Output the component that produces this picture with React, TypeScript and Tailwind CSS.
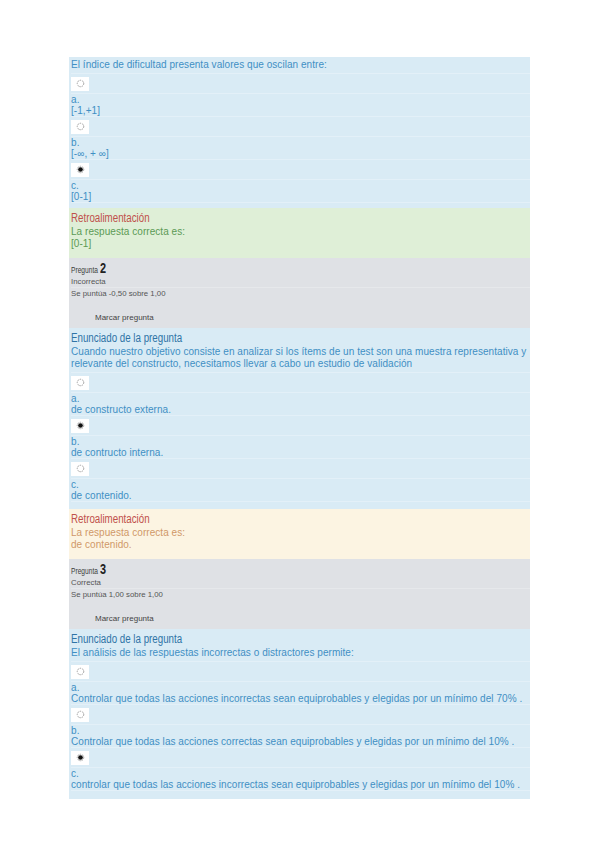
const sans = "font-['Liberation_Sans',Arial,sans-serif]";
const narrow = "inline-block origin-left scale-x-[0.78] whitespace-nowrap";

type Option = { letter: string; text: string; checked?: boolean };

const Radio = ({ checked }: { checked?: boolean }) => (
  <div className="flex h-[14px] w-[18px] items-center justify-center bg-white">
    <svg width="9" height="9" viewBox="0 0 10 10">
      <circle
        cx="5"
        cy="5"
        r="3.6"
        fill="none"
        stroke="#9a9a9a"
        strokeWidth="1.1"
        strokeDasharray="1.6 1"
      />
      {checked && <circle cx="5" cy="5" r="2.6" fill="#111" />}
    </svg>
  </div>
);

const OptionRow = ({ o }: { o: Option }) => (
  <div className="border-b border-[#e3f0f8]">
    <div className="flex h-[20px] items-center border-b border-[#e3f0f8]">
      <Radio checked={o.checked} />
    </div>
    <div className="h-[11px] leading-[11px]">{o.letter}.</div>
    <div className="h-[11px] whitespace-nowrap leading-[11px]">{o.text}</div>
  </div>
);

const Feedback = ({
  tone,
  answer,
}: {
  tone: "ok" | "bad";
  answer: string;
}) => (
  <div
    className={
      tone === "ok"
        ? "h-[50px] bg-[#dfefd7] pl-[2px] pt-[2px] text-[#5b9a55]"
        : "h-[50px] bg-[#fcf4e2] pl-[2px] pt-[2px] text-[#d09868]"
    }
  >
    <div className="h-[16px] text-[12.5px] leading-[16px] text-[#c0514b]">
      <span className={narrow}>Retroalimentación</span>
    </div>
    <div className="text-[10px] leading-[12px] tracking-[0.05px]">
      La respuesta correcta es:
    </div>
    <div className="text-[10px] leading-[12px] tracking-[0.05px]">{answer}</div>
  </div>
);

const Info = ({
  n,
  state,
  score,
}: {
  n: number;
  state: string;
  score: string;
}) => (
  <div className="h-[70px] bg-[#dfe1e5] pl-[2px] pt-[2px] text-[#3b3b3b]">
    <div className="flex h-[16px] items-end">
      <span className={`${narrow} text-[8.5px] leading-[12px]`}>Pregunta</span>
      <span className="-ml-[6px] text-[14px] font-bold leading-[15px] text-[#222]">
        <span className={narrow}>{n}</span>
      </span>
    </div>
    <div className="mt-[1px] border-b border-[#e6e8eb] text-[7.8px] leading-[10px] text-[#555]">
      {state}
    </div>
    <div className="text-[7.8px] leading-[11px] text-[#555]">{score}</div>
    <div className="mt-[14px] pl-[24px] text-[8px] leading-[10px] text-[#444]">
      Marcar pregunta
    </div>
  </div>
);

const Question = ({
  heading,
  lines,
  options,
  bottom,
}: {
  heading?: boolean;
  lines: string[];
  options: Option[];
  bottom: string;
}) => (
  <div className={`bg-[#d9ebf5] pl-[2px] text-[#3f8fc4] ${bottom}`}>
    {heading && (
      <div className="h-[18px] pt-[2px] text-[12.5px] leading-[16px] text-[#2f74a6]">
        <span className={narrow}>Enunciado de la pregunta</span>
      </div>
    )}
    <div className="border-b border-[#e3f0f8] pb-[2px]">
      {lines.map((l) => (
        <div
          key={l}
          className="whitespace-nowrap text-[10px] leading-[12px] tracking-[0.05px]"
        >
          {l}
        </div>
      ))}
    </div>
    <div className="text-[10px] tracking-[0.05px]">
      {options.map((o) => (
        <OptionRow key={o.letter} o={o} />
      ))}
    </div>
  </div>
);

export default function App() {
  return (
    <div className={`${sans} min-h-[848px] w-[599px] bg-white pt-[57px]`}>
      <div className="ml-[69px] w-[461px]">
        <div className="bg-[#d9ebf5] pt-[2px]" />
        <Question
          lines={["El índice de dificultad presenta valores que oscilan entre:"]}
          options={[
            { letter: "a", text: "[-1,+1]" },
            { letter: "b", text: "[-∞, + ∞]" },
            { letter: "c", text: "[0-1]", checked: true },
          ]}
          bottom="pb-[5px]"
        />
        <Feedback tone="ok" answer="[0-1]" />
        <Info n={2} state="Incorrecta" score="Se puntúa -0,50 sobre 1,00" />
        <Question
          heading
          lines={[
            "Cuando nuestro objetivo consiste en analizar si los ítems de un test  son una muestra representativa y",
            "relevante del constructo, necesitamos llevar a cabo un estudio de validación",
          ]}
          options={[
            { letter: "a", text: "de constructo externa." },
            { letter: "b", text: "de contructo interna.", checked: true },
            { letter: "c", text: "de contenido." },
          ]}
          bottom="pb-[7px]"
        />
        <Feedback tone="bad" answer="de contenido." />
        <Info n={3} state="Correcta" score="Se puntúa 1,00 sobre 1,00" />
        <Question
          heading
          lines={["El análisis de las respuestas incorrectas o distractores permite:"]}
          options={[
            {
              letter: "a",
              text: "Controlar que todas las acciones incorrectas sean equiprobables y elegidas por un mínimo del 70% .",
            },
            {
              letter: "b",
              text: "Controlar que todas las acciones correctas sean equiprobables y elegidas por un mínimo del 10% .",
            },
            {
              letter: "c",
              text: "controlar que todas las acciones incorrectas sean equiprobables y elegidas por un mínimo del 10% .",
              checked: true,
            },
          ]}
          bottom="pb-[8px]"
        />
      </div>
    </div>
  );
}
